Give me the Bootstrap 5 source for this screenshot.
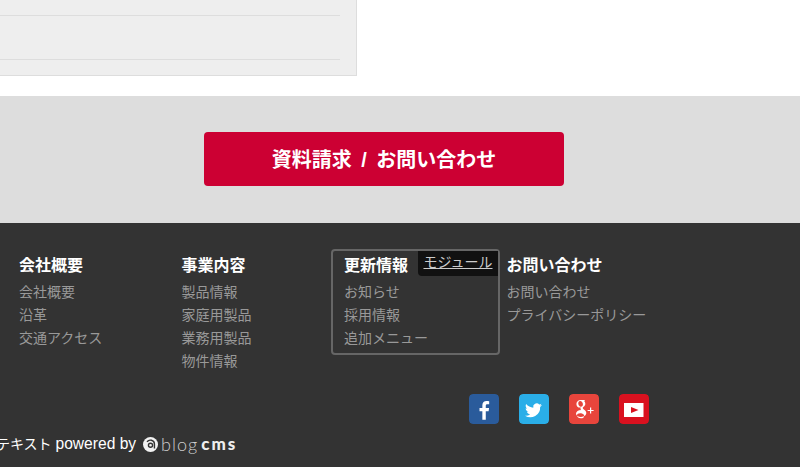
<!DOCTYPE html>
<html lang="ja">
<head>
    <meta charset="UTF-8">
    <meta name="viewport" content="width=device-width, initial-scale=1.0">
    <title>お問い合わせ</title>
    <link href="https://cdn.jsdelivr.net/npm/bootstrap@5.3.0/dist/css/bootstrap.min.css" rel="stylesheet">
    <style>
        body { font-family: "Liberation Sans", "Noto Sans CJK JP", sans-serif; overflow: hidden; background: #fff; }
        .top-area { height: 96px; }
        .info-panel { width: 357px; height: 76px; background: #eee; border-right: 1px solid #ddd; border-bottom: 1px solid #ddd; padding-right: 16px; }
        .info-row { border-bottom: 1px solid #ddd; height: 44px; }
        .info-row:first-child { height: 16px; }
        .contact-band { height: 127px; background: #ddd; padding: 36px 0 0 204px; }
        .contact-btn { display: block; width: 360px; height: 54px; background: #c03; border: 0; border-radius: 4px; color: #fff; font-size: 20px; font-weight: 700; line-height: 56px; padding: 0; word-spacing: 4px; }
        .contact-btn:hover { background: #c03; color: #fff; }
        .site-footer { height: 244px; background: #333; padding: 30px 0 0 19px; }
        .foot-col { width: 162.5px; position: relative; }
        .foot-col:last-child { width: auto; }
        .foot-title { color: #fff; font-size: 16px; font-weight: 700; line-height: 24px; margin: 0 0 4px; padding-top: 1px; height: 24px; }
        .foot-links { font-size: 14px; line-height: 23px; margin: 0; padding: 0; list-style: none; }
        .foot-links a { color: #999; text-decoration: none; }
        .edit-box { position: absolute; left: -13px; top: -4px; width: 169px; height: 106px; border: 2px solid #666; border-radius: 4px; pointer-events: none; }
        .edit-tag { position: absolute; right: 0; top: 0; width: 80px; height: 25px; background: #111; border-bottom-left-radius: 4px; color: #ccc; font-size: 14px; line-height: 22px; text-align: center; text-decoration: underline; }
        .social-row { height: 30px; gap: 20px; margin: 21px 0 0 450px; }
        .social-icon { width: 30px; height: 30px; border-radius: 4px; display: block; }
        .powered { color: #fff; font-size: 14px; line-height: 20px; margin: 10px 0 0 -23px; white-space: nowrap; }
        .powered-en { font-size: 15.6px; }
        .logo-mark { margin-left: 7px; }
        .logo-blog { font-family: Lato, sans-serif; font-weight: 300; font-size: 18px; letter-spacing: 1px; color: #ccc; margin-left: 3px; }
        .logo-cms { font-family: Lato, sans-serif; font-weight: 900; font-size: 17px; letter-spacing: 2px; color: #eee; margin-left: 3px; }
    </style>
</head>
<body>
<div class="top-area">
    <div class="info-panel">
        <div class="info-row"></div>
        <div class="info-row"></div>
    </div>
</div>

<div class="contact-band">
    <a href="#" class="contact-btn btn text-center">資料請求 / お問い合わせ</a>
</div>

<footer class="site-footer">
    <div class="d-flex">
        <div class="foot-col">
            <p class="foot-title">会社概要</p>
            <ul class="foot-links">
                <li><a href="#">会社概要</a></li>
                <li><a href="#">沿革</a></li>
                <li><a href="#">交通アクセス</a></li>
            </ul>
        </div>
        <div class="foot-col">
            <p class="foot-title">事業内容</p>
            <ul class="foot-links">
                <li><a href="#">製品情報</a></li>
                <li><a href="#">家庭用製品</a></li>
                <li><a href="#">業務用製品</a></li>
                <li><a href="#">物件情報</a></li>
            </ul>
        </div>
        <div class="foot-col">
            <p class="foot-title">更新情報</p>
            <ul class="foot-links">
                <li><a href="#">お知らせ</a></li>
                <li><a href="#">採用情報</a></li>
                <li><a href="#">追加メニュー</a></li>
            </ul>
            <div class="edit-box"><span class="edit-tag">モジュール</span></div>
        </div>
        <div class="foot-col">
            <p class="foot-title">お問い合わせ</p>
            <ul class="foot-links">
                <li><a href="#">お問い合わせ</a></li>
                <li><a href="#">プライバシーポリシー</a></li>
            </ul>
        </div>
    </div>

    <div class="social-row d-flex">
        <!-- facebook -->
        <svg class="social-icon" viewBox="0 0 30 30"><rect width="30" height="30" rx="4" fill="#2a5b9b"/><path transform="translate(1 2) scale(.95)" d="M16.600 25v-9h3l.5-3.500h-3.500v-2.200c0-1 .3-1.700 1.800-1.700h1.800V5.400c-.4 0-1.500-.2-2.700-.2-2.700 0-4.500 1.600-4.500 4.600v2.700h-3V16h3v9z" fill="#fff"/></svg>
        <!-- twitter -->
        <svg class="social-icon" viewBox="0 0 30 30"><rect width="30" height="30" rx="4" fill="#2aaee8"/><path transform="translate(2.900 4.800) scale(.77)" d="M26 8.200c-.8.400-1.700.600-2.600.700.900-.6 1.600-1.400 2-2.500-.9.500-1.800.900-2.900 1.100a4.500 4.500 0 0 0-7.700 4.100C11.100 11.400 7.800 9.600 5.500 6.900c-1.200 2-.6 4.700 1.400 6-.7 0-1.400-.2-2-.6 0 2.200 1.500 4.100 3.600 4.500-.7.200-1.400.2-2 .1.600 1.800 2.200 3.100 4.200 3.100A9.100 9.100 0 0 1 4 21.900a12.800 12.800 0 0 0 19.700-11.400c.9-.6 1.700-1.400 2.300-2.300z" fill="#fff"/></svg>
        <!-- google plus -->
        <svg class="social-icon" viewBox="0 0 30 30"><rect width="30" height="30" rx="4" fill="#e8453c"/><path transform="translate(3 .5)" d="M12.600 5.500H8.700c-2.500 0-4.300 1.800-4.300 3.900 0 2.100 1.500 3.700 3.700 3.700h.7c-.2.300-.3.700-.3 1.100 0 .6.300 1 .7 1.400-2.800.1-5.200 1.400-5.200 3.600 0 2 2.300 3.200 5 3.200 3.100 0 5.300-1.800 5.300-3.900 0-3-3.500-3.400-3.500-5 0-1.300 2.500-1.700 2.500-4.300 0-1.400-.7-2.300-1.500-3h1.400zM8.900 12.300c-1.300 0-2.400-1.400-2.600-3-.2-1.500.6-2.900 2-2.800 1.300 0 2.400 1.400 2.600 3 .2 1.500-.6 2.800-2 2.800zm.3 6.500c1.900.6 3 1.200 3 2.600 0 1.400-1.300 2.300-3.300 2.300-2.200 0-3.900-1.200-3.900-2.800 0-1.500 1.700-2.500 4.200-2.100z" fill="#fff"/><path d="M21 13.500h1.200v2.400h2.400v1.200h-2.400v2.400H21v-2.400h-2.400v-1.200H21z" fill="#fff"/></svg>
        <!-- youtube -->
        <svg class="social-icon" viewBox="0 0 30 30"><rect width="30" height="30" rx="4" fill="#d9111f"/><path d="M5 9h19.500v14H5z" fill="#fff"/><path d="M12 13l7.500 3-7.500 3z" fill="#d9111f"/></svg>
    </div>

    <div class="powered d-flex align-items-center">
        <span>テキスト <span class="powered-en">powered by</span></span>
        <svg width="15" height="15" viewBox="0 0 16 16" class="logo-mark"><circle cx="8" cy="8" r="8" fill="#f2f2f2"/><path d="M4.300 5.300A4.300 4.300 0 0 1 12.200 7.500V12.300" fill="none" stroke="#333" stroke-width="1.500"/><circle cx="8" cy="8.800" r="2.200" fill="none" stroke="#333" stroke-width="1.500"/></svg>
        <span class="logo-blog">blog</span><span class="logo-cms">cms</span>
    </div>
</footer>
<script src="https://cdn.jsdelivr.net/npm/bootstrap@5.3.0/dist/js/bootstrap.bundle.min.js"></script>
</body>
</html>
